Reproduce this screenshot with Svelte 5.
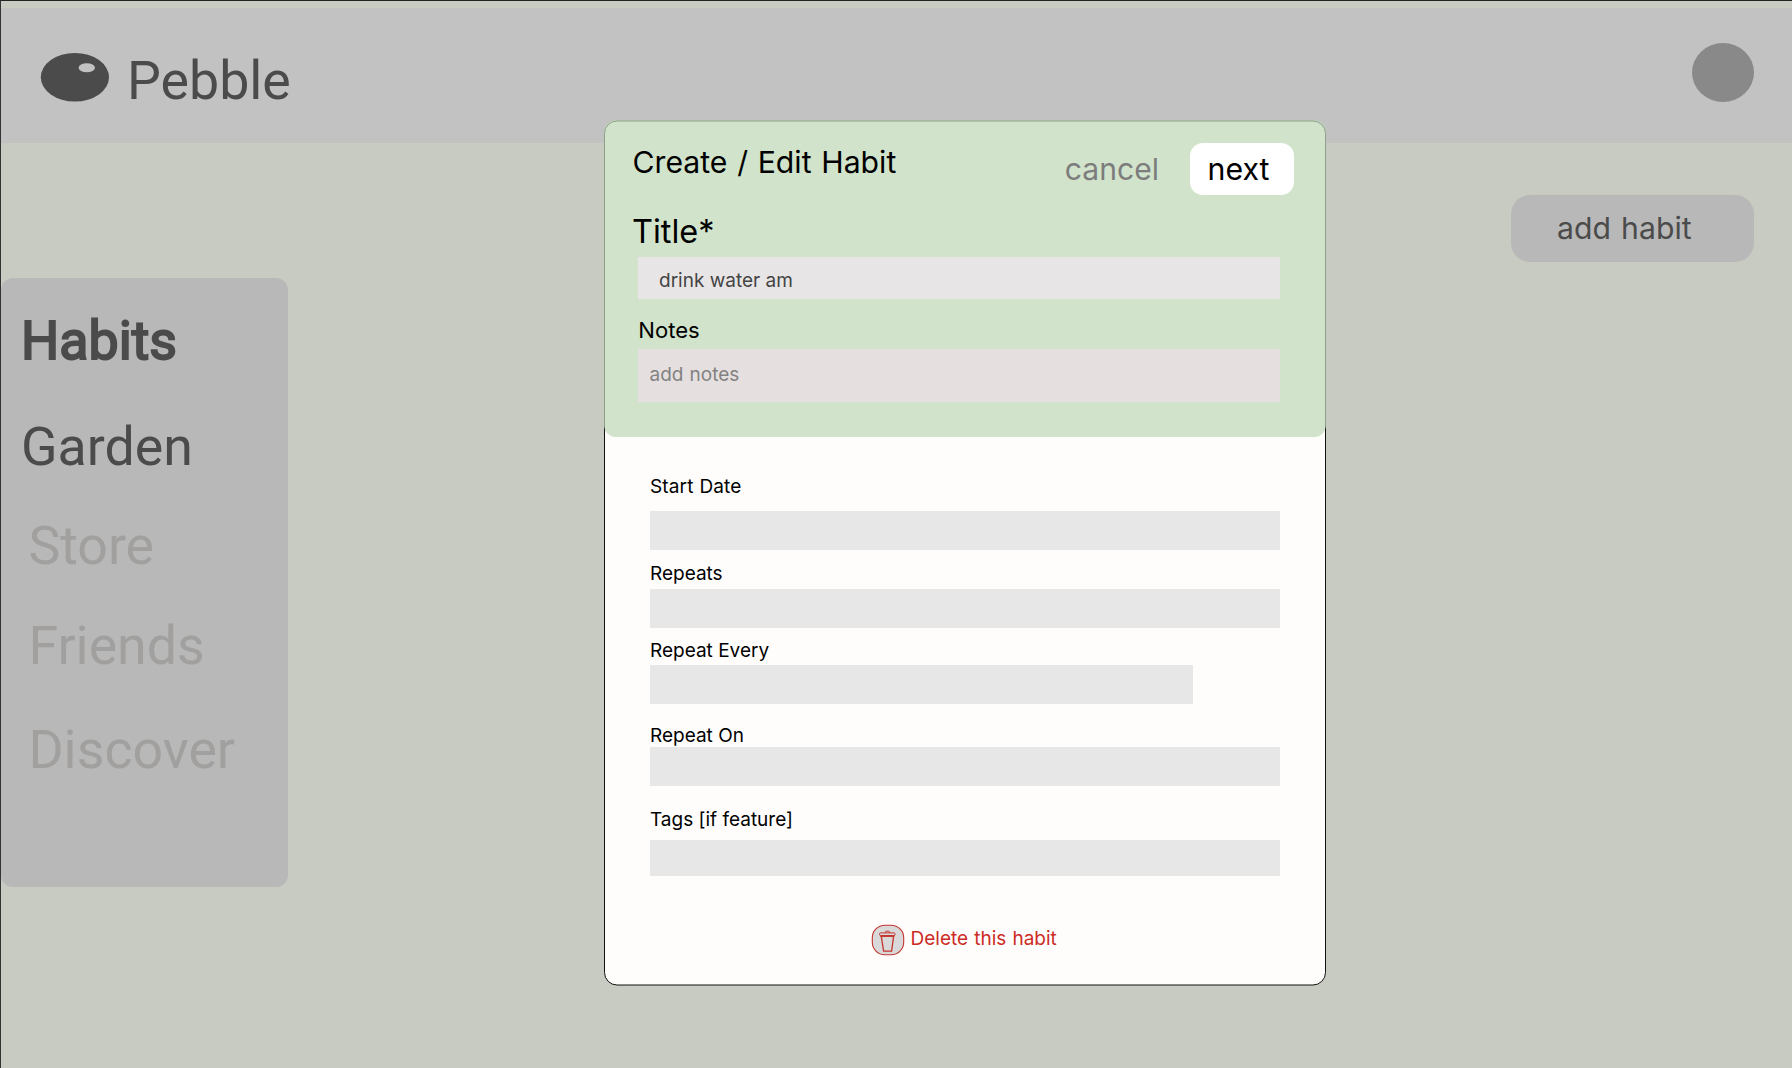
<script>
  const nav = [
    { label: 'Habits', kind: 'active' },
    { label: 'Garden', kind: '' },
    { label: 'Store', kind: 'muted' },
    { label: 'Friends', kind: 'muted' },
    { label: 'Discover', kind: 'muted' }
  ];
  const fields = [
    { label: 'Start Date', kind: 'start' },
    { label: 'Repeats', kind: 'repeats' },
    { label: 'Repeat Every', kind: 'every' },
    { label: 'Repeat On', kind: 'on' },
    { label: 'Tags [if feature]', kind: 'tags' }
  ];
</script>

<div class="page">
  <header class="topbar">
    <svg class="logo" width="70" height="50" viewBox="0 0 70 50">
      <ellipse cx="34.9" cy="25.3" rx="34.1" ry="24.3" fill="#4b4b4b" />
      <ellipse cx="46.8" cy="15.8" rx="8.2" ry="4.5" fill="#c2c2c2" />
    </svg>
    <span class="brand">Pebble</span>
    <span class="avatar"></span>
  </header>

  <div class="content">
    <nav class="sidebar">
      {#each nav as item}
        <div class="nav-item {item.kind} {item.label.toLowerCase()}">{item.label}</div>
      {/each}
    </nav>
    <div class="add">add habit</div>
  </div>

  <section class="modal">
    <div class="modal-head">
      <div class="head-row">
        <h1>Create / Edit Habit</h1>
        <span class="cancel">cancel</span>
        <span class="next">next</span>
      </div>
      <div class="title-label">Title*</div>
      <div class="title-input">drink water am</div>
      <div class="notes-label">Notes</div>
      <div class="notes-input">add notes</div>
    </div>
    <div class="form">
      {#each fields as f}
        <div class="field {f.kind}">
          <div class="label">{f.label}</div>
          <div class="input"></div>
        </div>
      {/each}
      <div class="delete">
        <svg width="34" height="32" viewBox="0 0 34 32" fill="none" stroke="#c5352f">
          <rect x="1.3" y="1.2" width="31.4" height="29.6" rx="12.5" fill="#d9d9d9" stroke-width="1.1" />
          <path d="M14.3 8.8V8.2a1 1 0 0 1 1-1h2.2a1 1 0 0 1 1 1v.6" stroke-width="1" />
          <rect x="8.6" y="8.9" width="15.4" height="2.6" rx="0.9" stroke-width="1" />
          <path d="M9.2 12.2H23.4" stroke-width="1.5" />
          <path d="M10.3 12.4L12.6 27.2H20.6L22.6 12.4" stroke-width="1.3" />
        </svg>
        <span>Delete this habit</span>
      </div>
    </div>
  </section>
</div>

<style>
  :global(body) { background: #c8cbc2; }
  .page {
    position: relative;
    box-sizing: border-box;
    width: 1792px;
    height: 1068px;
    overflow: hidden;
    padding-top: 7px;
    border-top: 1px solid #222;
    border-left: 1px solid #333;
    background: #c8cbc2;
    font-family: Inter, sans-serif;
  }
  .topbar {
    display: flex;
    align-items: flex-start;
    box-sizing: border-box;
    height: 135px;
    padding: 34px 38px 0 39px;
    background: #c2c2c2;
  }
  .logo { margin-top: 10px; flex: none; }
  .brand {
    margin: 7px auto 0 17px;
    font: 400 53.7px/64px Roboto, sans-serif;
    color: #4b4b4b;
  }
  .avatar { width: 62px; height: 59px; margin-top: 0.5px; border-radius: 50%; background: #898989; }

  .content { display: flex; justify-content: space-between; align-items: flex-start; }
  .sidebar {
    box-sizing: border-box;
    width: 287px;
    height: 609px;
    margin-top: 135px;
    padding: 31px 0 0 20px;
    border-radius: 12px;
    background: #b8b8b8;
  }
  .nav-item { font: 400 53.7px/64px Roboto, sans-serif; color: #4b4b4b; }
  .active { -webkit-text-stroke: 2px #4b4b4b; }
  .muted { padding-left: 7.4px; color: #a1a09f; }
  .garden { margin-top: 42px; }
  .store { margin-top: 35px; }
  .friends { margin-top: 36px; }
  .discover { margin-top: 40px; }
  .add {
    box-sizing: border-box;
    width: 243px;
    height: 67px;
    margin: 52px 38px 0 0;
    padding-left: 46px;
    border-radius: 19px;
    background: #b8b8b8;
    color: #4b4b4b;
    font-size: 30.2px;
    word-spacing: 1.7px;
    line-height: 67px;
  }

  .modal { position: absolute; left: 603px; top: 119px; width: 722px; height: 866px; }
  .modal::before {
    content: '';
    position: absolute;
    inset: 0 0 1px 0;
    box-sizing: border-box;
    border: 1px solid #111;
    border-radius: 13px;
    background: #fefdfc;
    transform: translateY(0.5px);
  }
  .modal-head {
    position: relative;
    box-sizing: border-box;
    height: 317px;
    padding: 23px 32px 0 34px;
    border-radius: 12px;
    background: rgba(191, 218, 184, 0.716);
  }
  .head-row { display: flex; align-items: flex-start; height: 52px; }
  h1 {
    margin: 1px auto 0 -5.5px;
    font-size: 30.2px;
    font-weight: 400;
    line-height: 36px;
    word-spacing: 1.2px;
    color: #000;
  }
  .cancel { margin: 0 31px 0 0; font-size: 30.1px; line-height: 52px; color: #7d7d7d; }
  .next {
    box-sizing: border-box;
    width: 104px;
    height: 52px;
    padding-left: 17.5px;
    border-radius: 13px;
    background: #fff;
    font-size: 30.3px;
    line-height: 52px;
    color: #000;
  }
  .title-label { margin: 17px 0 5px -6px; font-size: 32.5px; line-height: 40px; }
  .title-input {
    height: 42px;
    width: 621px;
    padding-left: 21px;
    background: #e7e5e6;
    font-size: 19px;
    line-height: 47px;
    color: #444;
  }
  .notes-label { margin: 18px 0 6px 0; padding-left: 0.3px; font-size: 22.1px; line-height: 26px; }
  .notes-input {
    height: 53px;
    width: 630.5px;
    padding-left: 11.5px;
    background: #e5dfdf;
    font-size: 19px;
    line-height: 52px;
    word-spacing: 0.8px;
    color: #828282;
  }
  .form { position: relative; padding: 38px 46px 0 46px; }
  .label { font-size: 19px; line-height: 24px; color: #000; }
  .input { height: 39px; width: 630.3px; background: #e7e7e7; }
  .start .label { letter-spacing: 0.13px; word-spacing: 0.5px; }
  .start .input { margin-top: 12px; }
  .repeats { margin-top: 12px; }
  .repeats .input { margin-top: 3px; }
  .every { margin-top: 11px; }
  .every .input { margin-top: 2px; width: 543px; }
  .on { margin-top: 20px; }
  .on .input { margin-top: -1px; }
  .tags { margin-top: 22px; }
  .tags .input { margin-top: 8px; height: 36px; }
  .delete {
    display: flex;
    align-items: flex-start;
    margin: 47.5px 0 0 220.5px;
    color: #cc2b24;
    font-size: 19px;
    line-height: 30px;
    word-spacing: 0.8px;
  }
  .delete span { margin-left: 6px; }
</style>
